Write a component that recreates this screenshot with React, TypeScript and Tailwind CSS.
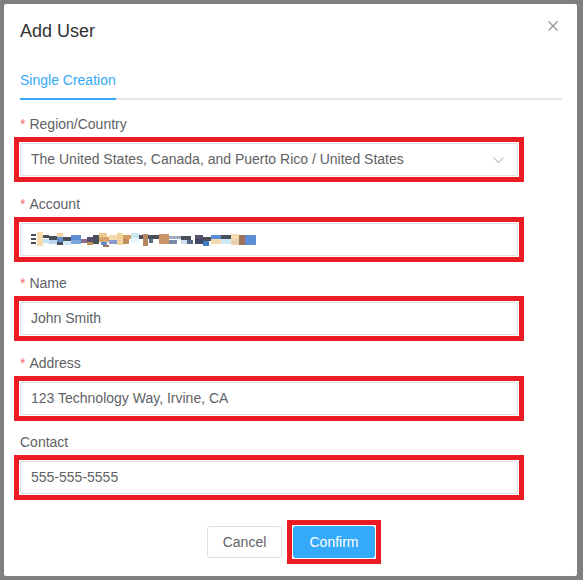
import React from "react";

type Px = [number, number, number, number, string];

// blurred account value, drawn as pixel blocks
const blur: Px[] = [
  [0, 2, 5, 2, "#4b4f5a"], [0, 6, 5, 2, "#4b4f5a"], [0, 10, 5, 2, "#4b4f5a"],
  [6, 0, 6, 14, "#f5dcae"],
  [12, 3, 6, 3, "#4b4f5a"], [12, 7, 6, 4, "#c8e6f8"],
  [18, 4, 8, 4, "#4b4f5a"], [18, 8, 8, 4, "#bcd6f0"],
  [26, 1, 6, 4, "#f2d3a0"], [26, 5, 6, 5, "#5f8fcf"], [26, 10, 6, 3, "#4b4f5a"],
  [32, 5, 8, 4, "#4b4f5a"], [32, 9, 8, 4, "#cfe7f7"],
  [40, 3, 10, 5, "#5b8ed4"], [40, 8, 10, 4, "#7aa6dc"],
  [50, 7, 6, 4, "#8a6c8a"], [56, 5, 6, 5, "#5a4f6e"], [56, 10, 6, 3, "#c09060"],
  [62, 3, 6, 9, "#4b4f5a"],
  [68, 1, 8, 4, "#f0c890"], [68, 5, 10, 5, "#d9a46c"], [70, 10, 6, 3, "#5e8fd0"], [72, 13, 6, 2, "#a07050"],
  [78, 3, 8, 5, "#f5dcae"], [78, 8, 8, 4, "#8a9ad0"],
  [86, 1, 6, 12, "#f2d3a0"],
  [92, 3, 8, 4, "#d49a60"], [92, 7, 6, 5, "#c08a5a"],
  [100, 1, 8, 5, "#c8e8f0"], [100, 6, 8, 5, "#e6f8fb"],
  [108, 3, 10, 4, "#4b4f5a"], [112, 2, 5, 12, "#b58860"],
  [118, 3, 10, 4, "#4b4f5a"], [118, 7, 4, 4, "#5e6b80"],
  [128, 2, 10, 10, "#c99468"],
  [138, 4, 12, 3, "#a4aac0"], [138, 8, 8, 4, "#7b8aa8"],
  [150, 4, 10, 4, "#4b4f5a"], [150, 8, 6, 4, "#cfdff0"], [156, 8, 6, 4, "#5b6b8b"],
  [164, 3, 8, 4, "#5a4f6e"], [164, 7, 8, 5, "#404868"],
  [172, 5, 8, 4, "#4b4f5a"], [172, 9, 6, 5, "#3f7fc0"],
  [180, 3, 10, 4, "#5b8ed4"], [180, 7, 10, 5, "#f3d9b0"],
  [190, 3, 10, 4, "#4b4f5a"], [190, 7, 10, 5, "#cfe8f8"],
  [200, 2, 8, 5, "#f5dcae"], [200, 7, 8, 6, "#e8d0b0"],
  [208, 3, 6, 10, "#a0705a"],
  [214, 3, 11, 10, "#5b8ed4"],
];

const Field = ({
  label,
  required,
  children,
}: {
  label: string;
  required?: boolean;
  children: React.ReactNode;
}) => (
  <div className="mb-[11.5px]">
    <div className="h-5 leading-5 text-[14px] text-[#606266]">
      {required && <span className="text-[#f56c6c] mr-[4px]">*</span>}
      {label}
    </div>
    <div className="mt-[3px] -ml-[6px] w-[510px] border-[5px] border-[#ec1c24] p-px">
      <div className="h-[33px] border border-[#dcdfe6] rounded-[2px] pl-[10px] pr-[13px] flex items-center justify-between text-[14px] text-[#606266]">
        {children}
      </div>
    </div>
  </div>
);

export default function App() {
  return (
    <div className="w-[583px] h-[580px] bg-[#7f7f7f] pt-[4px] pl-[4px] font-['Liberation_Sans',Arial,sans-serif]">
      <div className="relative w-[573px] h-[572px] bg-white rounded-[2px] px-[16px]">
        <button className="absolute top-[17px] right-[19px] w-[10px] h-[10px]">
          <svg width="10" height="10" viewBox="0 0 10 10">
            <path d="M0.5 0.5 L9.5 9.5 M9.5 0.5 L0.5 9.5" stroke="#909399" strokeWidth="1.2" />
          </svg>
        </button>

        <div className="pt-[17px] h-[37px] text-[18px] leading-5 text-[#303133]">Add User</div>

        <div className="mt-[27px] w-[542px] border-b-2 border-[#e4e7ed]">
          <div className="inline-block h-5 leading-5 text-[14px] text-[#35a9fa] pb-[8px] box-content border-b-2 border-[#35a9fa] -mb-[2px]">
            Single Creation
          </div>
        </div>

        <div className="mt-[14px]">
          <Field label="Region/Country" required>
            <span>The United States, Canada, and Puerto Rico / United States</span>
            <svg width="11" height="6" viewBox="0 0 11 6">
              <path d="M0.5 0.5 L5.5 5.5 L10.5 0.5" fill="none" stroke="#c0c4cc" strokeWidth="1.1" />
            </svg>
          </Field>
          <Field label="Account" required>
            <svg width="225" height="15" viewBox="0 0 225 15">
              {blur.map(([x, y, w, h, c], i) => (
                <rect key={i} x={x} y={y} width={w} height={h} fill={c} />
              ))}
            </svg>
          </Field>
          <Field label="Name" required>
            <span>John Smith</span>
          </Field>
          <Field label="Address" required>
            <span>123 Technology Way, Irvine, CA</span>
          </Field>
          <Field label="Contact">
            <span>555-555-5555</span>
          </Field>
        </div>

        <div className="mt-[20px] flex items-center pl-[187px]">
          <button className="w-[75px] h-[32px] border border-[#dcdfe6] rounded-[3px] text-[14px] text-[#606266] bg-white">
            Cancel
          </button>
          <div className="ml-[5px] border-[5px] border-[#ec1c24] p-px">
            <button className="w-[82px] h-[32px] rounded-[3px] bg-[#35a9fa] text-[14px] text-white">
              Confirm
            </button>
          </div>
        </div>
      </div>
    </div>
  );
}
